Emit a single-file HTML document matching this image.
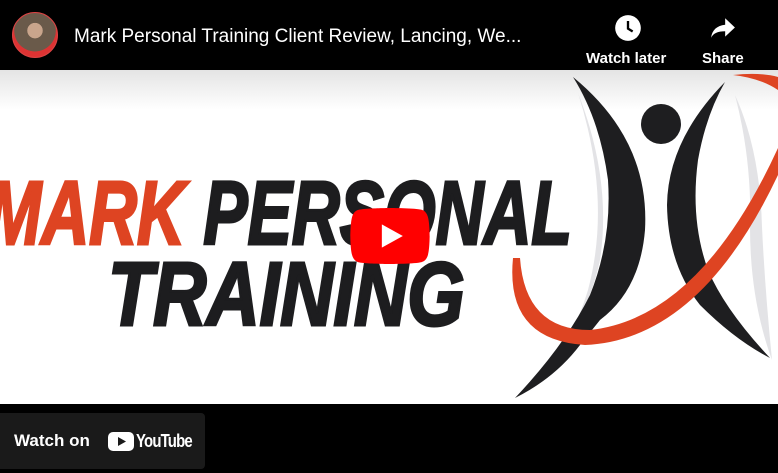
<!DOCTYPE html>
<html><head><style>
body{margin:0;width:778px;height:473px;background:#000;overflow:hidden;position:relative;font-family:"Liberation Sans",sans-serif}
.img{position:absolute;left:0;top:70px;width:778px;height:334px;background:linear-gradient(#e4e4e4,#fff 40px,#fff);overflow:hidden}
.t{position:absolute;font-weight:bold;font-style:italic;white-space:nowrap;transform-origin:0 0;font-size:90px;line-height:103px;-webkit-text-stroke:3px currentColor}
</style></head><body>
<div style="position:absolute;left:12px;top:12px;width:46px;height:46px;border-radius:50%;background:radial-gradient(circle at 50% 40%,#c9a58c 0 22%,#6a5a4a 23% 60%,#d33 61%);border:1px solid #d44;box-sizing:border-box"></div>
<div style="position:absolute;left:74px;top:26px;color:#fff;font-size:19px">Mark Personal Training Client Review, Lancing, We...</div>
<svg style="position:absolute;left:614px;top:14px" width="28" height="28" viewBox="0 0 24 24"><circle cx="12" cy="12" r="11" fill="#fff"/><path d="M12 6v6.5l4 2.5" stroke="#000" stroke-width="2" fill="none"/></svg>
<div style="position:absolute;left:586px;top:50px;color:#fff;font-size:15px;font-weight:bold">Watch later</div>
<svg style="position:absolute;left:710px;top:16px" width="26" height="24" viewBox="0 0 24 22"><path d="M14 2l9 8.5-9 8.5v-5C7 14 3 16 1 20c1-7 5-11 13-12z" fill="#fff"/></svg>
<div style="position:absolute;left:702px;top:50px;color:#fff;font-size:15px;font-weight:bold">Share</div>
<div class="img">
<svg style="position:absolute;left:0;top:0" width="778" height="334" viewBox="0 70 778 334">
<path d="M578 93 Q612 200 588 290 Q570 350 530 392 Q585 330 600 260 Q612 180 578 93Z" fill="#e3e3e6"/>
<path d="M735 95 Q752 160 750 227 Q750 300 772 360 Q765 290 762 227 Q760 150 735 95Z" fill="#e3e3e6"/>
<path d="M573 77 Q650 140 645 230 Q640 290 600 320 L580 345 Q555 378 515 398 Q565 345 590 295 Q612 240 608 180 Q600 120 573 77Z" fill="#1e1e20"/>
<path d="M725 82 Q668 140 667 205 Q668 265 700 305 Q735 340 770 358 Q725 310 708 270 Q690 220 698 160 Q706 115 725 82Z" fill="#1e1e20"/>
<circle cx="661" cy="124" r="20" fill="#1e1e20"/>
<path d="M513 258 Q505 340 585 345 Q700 340 778 175 L778 148 Q700 318 590 330 Q525 330 520 258Z" fill="#de4422"/>
<path d="M733 75 Q760 72 778 77 L778 90 Q760 78 733 75Z" fill="#de4422"/>
</svg>
<div class="t" style="left:-14px;top:93px;transform:scaleX(0.737);color:#1d1d1f"><span style="color:#de4422">MARK</span> PERSONAL</div>
<div class="t" style="left:108px;top:174px;transform:scaleX(0.82);color:#1d1d1f">TRAINING</div>
</div>
<svg style="position:absolute;left:350px;top:208px" width="80" height="56" viewBox="0 0 68 48"><path d="M66.5 7.7c-.8-2.9-2.5-5.4-5.4-6.2C55.8.1 34 0 34 0S12.2.1 6.9 1.6C4 2.4 2.3 4.8 1.5 7.7 0 13 0 24 0 24s0 11 1.5 16.3c.8 2.9 2.5 5.4 5.4 6.2C12.2 47.9 34 48 34 48s21.8-.1 27.1-1.6c2.9-.8 4.6-3.2 5.4-6.1C68 35 68 24 68 24s0-11-1.5-16.3z" fill="#f00"/><path d="M45 24L27 14v20" fill="#fff"/></svg>
<div style="position:absolute;left:0;top:413px;width:205px;height:56px;background:#1a1a1a;border-radius:0 4px 4px 0"></div>
<div style="position:absolute;left:14px;top:431px;color:#fff;font-size:17px;font-weight:bold">Watch on</div>
<svg style="position:absolute;left:108px;top:432px" width="26" height="19" viewBox="0 0 26 19"><rect width="26" height="19" rx="5" fill="#fff"/><path d="M10 5v9l8-4.5z" fill="#1a1a1a"/></svg>
<div style="position:absolute;left:136px;top:431px;color:#fff;font-size:18px;font-weight:bold;letter-spacing:-1px;transform:scaleX(0.83);transform-origin:0 0">YouTube</div>
</body></html>
